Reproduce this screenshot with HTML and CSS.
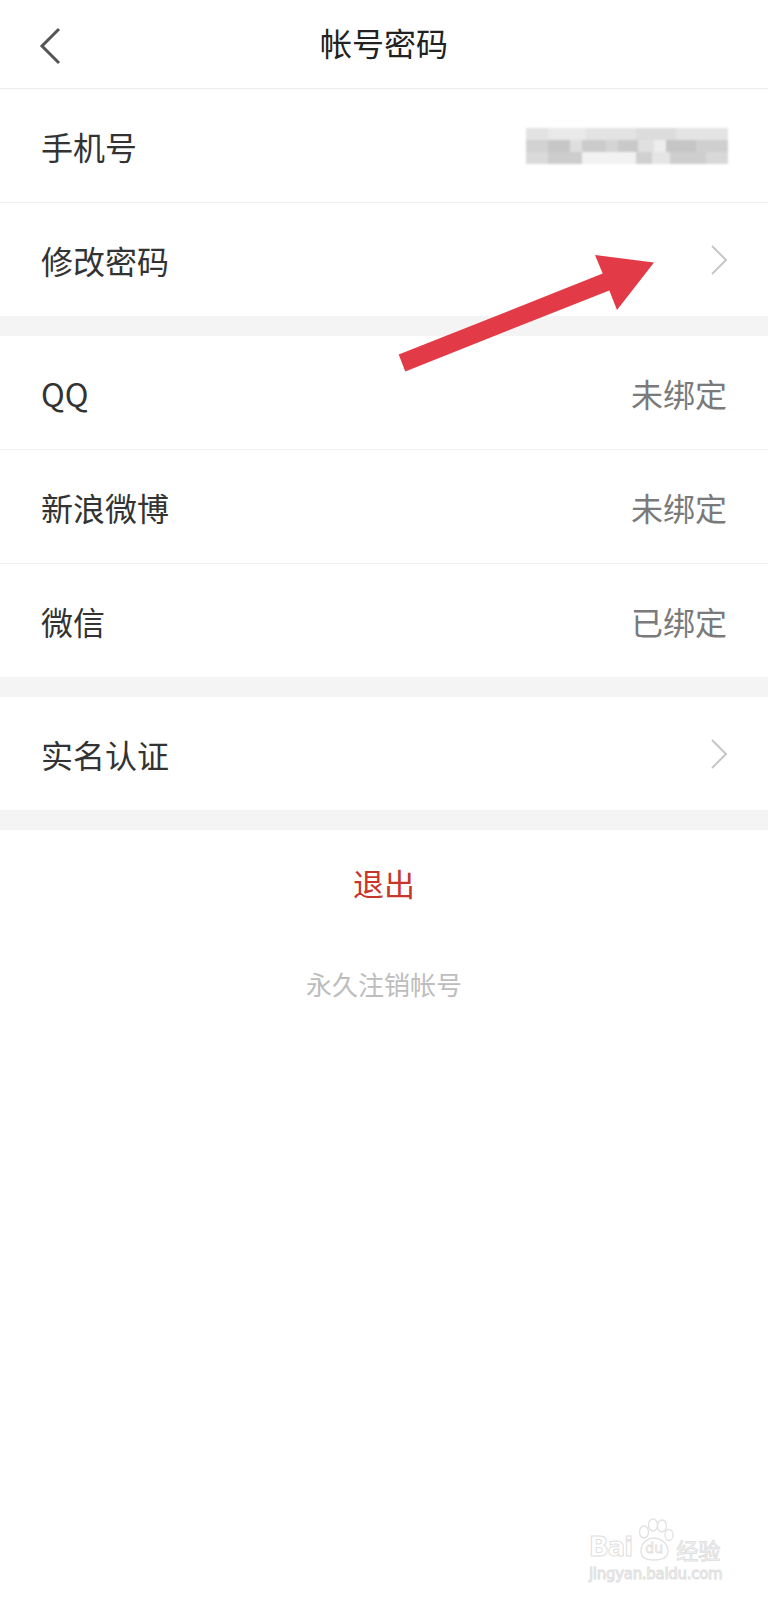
FILE: index.html
```html
<!DOCTYPE html>
<html lang="zh-CN">
<head>
<meta charset="utf-8">
<title>帐号密码</title>
<link rel="stylesheet" href="styles.css">
</head>
<body>
<div class="page">
  <header class="topbar">
    <svg class="back" width="24" height="38" viewBox="0 0 24 38"><polyline points="20,2 3,19 20,36" fill="none" stroke="#555" stroke-width="3" stroke-linejoin="miter"/></svg>
    <h1 class="title">帐号密码</h1>
  </header>

  <section class="group">
    <div class="row">
      <span class="label">手机号</span>
      <span class="mosaic"><i class="m1"></i><i class="m2"></i><i class="m3"></i></span>
    </div>
    <div class="row">
      <span class="label">修改密码</span>
      <svg class="chev" width="18" height="30" viewBox="0 0 18 30"><polyline points="2,1 16,15 2,29" fill="none" stroke="#c6c6c6" stroke-width="2"/></svg>
    </div>
  </section>

  <div class="band"></div>

  <section class="group">
    <div class="row"><span class="label">QQ</span><span class="value">未绑定</span></div>
    <div class="row"><span class="label">新浪微博</span><span class="value">未绑定</span></div>
    <div class="row"><span class="label">微信</span><span class="value">已绑定</span></div>
  </section>

  <div class="band"></div>

  <section class="group">
    <div class="row">
      <span class="label">实名认证</span>
      <svg class="chev" width="18" height="30" viewBox="0 0 18 30"><polyline points="2,1 16,15 2,29" fill="none" stroke="#c6c6c6" stroke-width="2"/></svg>
    </div>
  </section>

  <div class="band"></div>

  <div class="logout">退出</div>
  <div class="cancel">永久注销帐号</div>

  <svg class="arrow" width="768" height="400" viewBox="0 0 768 400">
    <polygon points="398.7,354.6 602.7,273.6 595,255 654,262.5 617,310 609.3,290.4 405.3,371.4" fill="#e23a46"/>
  </svg>

  <div class="watermark">
    <div class="wm-top">
      <span class="wm-bai">Bai</span>
      <span class="wm-paw">
        <svg width="42" height="44" viewBox="0 0 42 44">
          <g fill="#fff" stroke="#e2e2e2" stroke-width="1.3">
            <ellipse cx="11" cy="14" rx="4.5" ry="6"/>
            <ellipse cx="20" cy="7" rx="4.5" ry="6"/>
            <ellipse cx="29" cy="8" rx="4.5" ry="6"/>
            <ellipse cx="36" cy="17" rx="4" ry="5.5"/>
            <path d="M8 33 C8 24 16 20 21 20 C27 20 35 25 35 33 C35 40 28 42 21 42 C13 42 8 40 8 33 Z"/>
          </g>
        </svg>
        <span class="wm-du">du</span>
      </span>
      <span class="wm-jy">经验</span>
    </div>
    <div class="wm-url">jingyan.baidu.com</div>
  </div>
</div>
</body>
</html>
```
FILE: styles.css
```css
* { box-sizing: border-box; }
html, body { margin: 0; padding: 0; background: #fff; }
body {
  font-family: "Noto Sans CJK SC", "Noto Sans", sans-serif;
  color: #333;
}
.page {
  position: relative;
  width: 768px;
  min-height: 1600px;
  background: #fff;
  overflow: hidden;
}
.topbar {
  height: 89px;
  border-bottom: 1px solid #ededed;
  display: flex;
  align-items: center;
  justify-content: center;
  position: relative;
}
.back {
  position: absolute;
  left: 39px;
  top: 27px;
}
.title {
  margin: 0;
  font-size: 32px;
  font-weight: 400;
  color: #222;
  line-height: 1;
  padding-bottom: 4px;
}
.group { background: #fff; }
.row {
  height: 114px;
  padding: 0 41px 0 41px;
  display: flex;
  align-items: center;
  justify-content: space-between;
  border-bottom: 1px solid #efefef;
}
.row:last-child { border-bottom: none; height: 113px; }
.label {
  font-size: 32px;
  color: #333;
  line-height: 1;
}
.value {
  font-size: 32px;
  color: #7a7a7a;
  line-height: 1;
}
.chev { margin-right: -1px; }
.band {
  height: 20px;
  background: #f4f4f4;
}
.mosaic {
  display: flex;
  flex-direction: column;
  width: 202px;
  height: 36px;
  margin-right: -1px;
  filter: blur(1.2px);
}
.mosaic i { display: block; flex: 1; }
.mosaic .m1 {
  background: linear-gradient(90deg,
    #e2e2e2 0 22px, #e9e9e9 22px 60px, #e3e3e3 60px 110px, #dcdcdc 110px 150px, #e4e4e4 150px 202px);
}
.mosaic .m2 {
  background: linear-gradient(90deg,
    #d2d2d2 0 22px, #c6c6c6 22px 44px, #dedede 44px 56px, #cbcbcb 56px 80px, #d4d4d4 80px 92px,
    #c9c9c9 92px 112px, #e0e0e0 112px 128px, #ededed 128px 140px, #c5c5c5 140px 170px, #cfcfcf 170px 202px);
}
.mosaic .m3 {
  background: linear-gradient(90deg,
    #dadada 0 22px, #cdcdcd 22px 56px, #f2f2f2 56px 110px, #d0d0d0 110px 126px, #e5e5e5 126px 144px,
    #cecece 144px 180px, #d8d8d8 180px 202px);
}
.logout {
  height: 106px;
  line-height: 106px;
  text-align: center;
  font-size: 31px;
  color: #c8352a;
}
.cancel {
  padding-top: 30px;
  line-height: 36px;
  text-align: center;
  font-size: 26px;
  color: #bdbdbd;
}
.arrow {
  position: absolute;
  left: 0;
  top: 0;
  pointer-events: none;
}
.watermark {
  position: absolute;
  left: 589px;
  top: 1514px;
  width: 140px;
  font-family: "DejaVu Sans", sans-serif;
  color: #fff;
  -webkit-text-stroke: 1px #e0e0e0;
}
.wm-top {
  display: flex;
  align-items: flex-end;
  height: 48px;
}
.wm-bai {
  font-size: 26px;
  font-weight: 700;
  line-height: 1;
  letter-spacing: -1px;
  padding-bottom: 2px;
}
.wm-paw {
  position: relative;
  width: 42px;
  height: 44px;
  margin-left: 1px;
}
.wm-paw svg { display: block; }
.wm-du {
  position: absolute;
  left: 12px;
  top: 23px;
  font-size: 14px;
  line-height: 1;
  -webkit-text-stroke: 0.8px #e0e0e0;
}
.wm-jy {
  font-family: "Noto Sans CJK SC", sans-serif;
  font-size: 22px;
  line-height: 1;
  padding-bottom: 2px;
  margin-left: 1px;
}
.wm-url {
  font-size: 15px;
  line-height: 20px;
  letter-spacing: -0.3px;
  margin-top: 2px;
}
```
